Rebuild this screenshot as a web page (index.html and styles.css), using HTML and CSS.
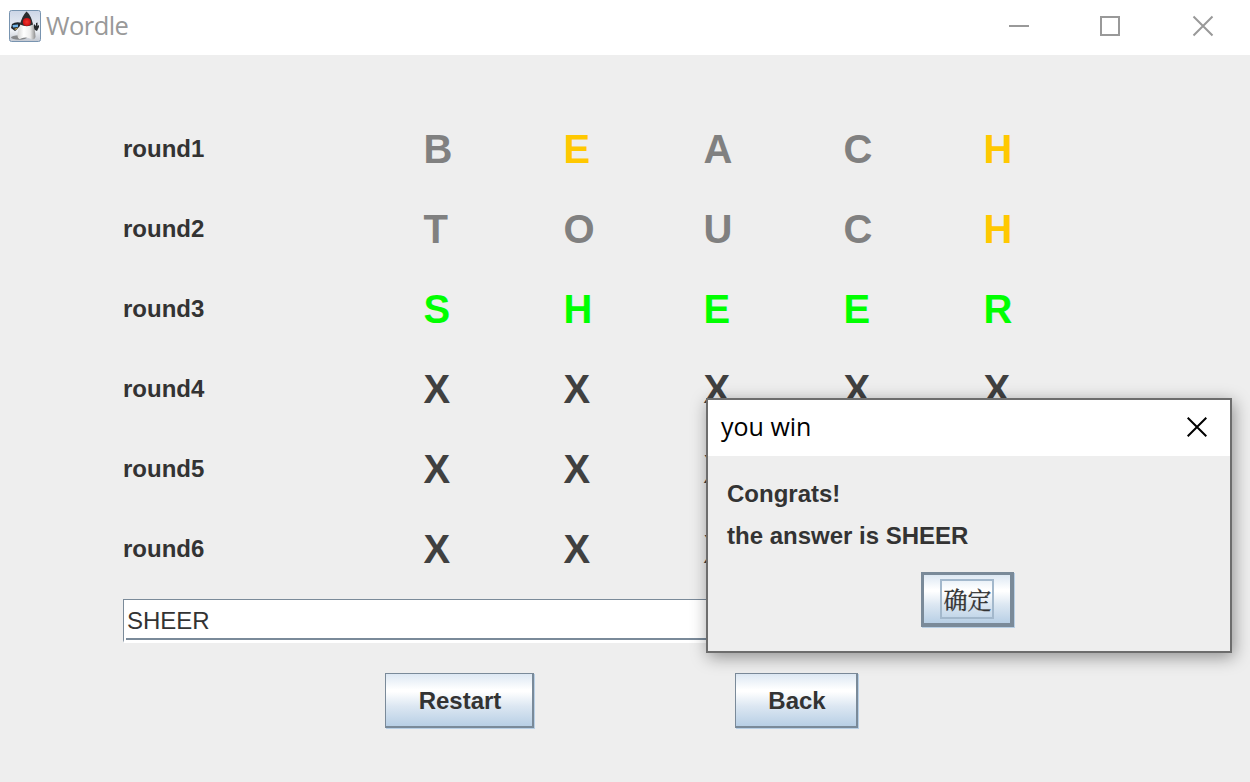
FILE: index.html
```html
<!DOCTYPE html>
<html lang="en">
<head>
<meta charset="utf-8">
<title>Wordle</title>
<link rel="stylesheet" href="styles.css">
</head>
<body>
<header class="titlebar">
  <svg class="app-icon" viewBox="0 0 32 32">
    <defs>
      <linearGradient id="tile" x1="0" y1="0" x2="0" y2="1"><stop offset="0" stop-color="#ccd5e6"/><stop offset=".65" stop-color="#eef1f6"/><stop offset="1" stop-color="#c2c7d0"/></linearGradient>
      <linearGradient id="body" x1="0" y1="0" x2="1" y2="0"><stop offset="0" stop-color="#d5d5d5"/><stop offset=".35" stop-color="#fff"/><stop offset=".7" stop-color="#eee"/><stop offset="1" stop-color="#8d8d8d"/></linearGradient>
      <radialGradient id="nose"><stop offset="0" stop-color="#f5352e"/><stop offset="1" stop-color="#c80f12"/></radialGradient>
    </defs>
    <rect x=".5" y=".5" width="31" height="31" rx="2" fill="url(#tile)" stroke="#7894b0"/>
    <ellipse cx="10" cy="27.500" rx="8" ry="2.200" fill="#666" opacity=".7"/>
    <path d="M12 16C9 17 8 20 6 21L2 18L3 14Q7 11 13 13Z" fill="#20252b"/>
    <path d="M3.500 15L9 14.500L9 17L4 17.500Z" fill="#72b5e8"/>
    <path d="M5 19L9 17.500L7 20Z" fill="#d6a94b"/>
    <path d="M24 19L28 21L30 17V15L28.500 16V12.500L27 13V16L25 14Z" fill="#25282b"/>
    <path d="M12 13Q8 22 8.500 26Q9 30.500 12 28.500Q17 26.500 21 28.500Q25.500 31 26.500 27Q26.500 20 23 12Z" fill="url(#body)"/>
    <path d="M17.500 1.500Q22 5 24 14.500Q18 18 11 14.500Q13 6 17.500 1.500Z" fill="#2b2d2f"/>
    <circle cx="17.800" cy="12" r="4" fill="url(#nose)"/>
  </svg>
  <h1 class="app-name">Wordle</h1>
  <svg class="controls" viewBox="0 0 206 24">
    <path d="M0 12H20" />
    <rect x="92" y="3" width="18" height="18"/>
    <path d="M184.500 2.500L203.500 21.500M203.500 2.500L184.500 21.500"/>
  </svg>
</header>
<main class="content">
  <section class="board">
    <div class="row"><span class="round">round1</span><b class="miss">B</b><b class="near">E</b><b class="miss">A</b><b class="miss">C</b><b class="near">H</b></div>
    <div class="row"><span class="round">round2</span><b class="miss">T</b><b class="miss">O</b><b class="miss">U</b><b class="miss">C</b><b class="near">H</b></div>
    <div class="row"><span class="round">round3</span><b class="hit">S</b><b class="hit">H</b><b class="hit">E</b><b class="hit">E</b><b class="hit">R</b></div>
    <div class="row"><span class="round">round4</span><b>X</b><b>X</b><b>X</b><b>X</b><b>X</b></div>
    <div class="row"><span class="round">round5</span><b>X</b><b>X</b><b>X</b><b>X</b><b>X</b></div>
    <div class="row"><span class="round">round6</span><b>X</b><b>X</b><b>X</b><b>X</b><b>X</b></div>
  </section>
  <div class="field"><div class="field-inner">SHEER</div></div>
  <div class="actions">
    <button class="btn restart">Restart</button>
    <button class="btn back">Back</button>
  </div>
</main>
<section class="dialog">
  <header class="dialog-title">
    <span>you win</span>
    <svg class="close" viewBox="0 0 20 20"><path d="M.7 .7L19.300 19.300M19.300 .7L.7 19.300"/></svg>
  </header>
  <div class="dialog-body">
    <p>Congrats!</p>
    <p>the answer is SHEER</p>
    <button class="btn ok"><span class="focus">确定</span></button>
  </div>
</section>
</body>
</html>
```
FILE: styles.css
```css
* { box-sizing: border-box; }
body {
  margin: 0;
  width: 1250px;
  height: 782px;
  overflow: hidden;
  position: relative;
  background: #eee;
  color: #333;
  font: bold 24px/28px "Liberation Sans", Arial, sans-serif;
}
.titlebar {
  display: flex;
  align-items: center;
  height: 55px;
  padding: 0 35px 3px 9px;
  background: #fff;
}
.app-icon { width: 32px; height: 32px; }
.app-name {
  margin: -2px auto 0 5px;
  color: #999;
  font: 400 25.5px/36px "Open Sans", "Noto Sans", sans-serif;
  letter-spacing: -.55px;
}
.controls {
  width: 206px;
  height: 24px;
  fill: none;
  stroke: #999;
  stroke-width: 2;
}
.content { padding: 54px 0 0 123px; }
.row {
  display: grid;
  grid-template-columns: 300.5px repeat(5, 140px);
  align-items: center;
  height: 80px;
}
.row b { font-size: 40px; line-height: 46px; color: #404040; }
.row .miss { color: #808080; }
.row .near { color: #ffc800; }
.row .hit { color: #0f0; }
.field {
  width: 1004px;
  height: 44px;
  margin-top: 10px;
  border-left: 1px solid #7a8a99;
  border-bottom: 3px solid #fff;
  border-top: 1px solid #7a8a99;
  padding-left: 2px;
  background: #fff;
}
.field-inner {
  height: 40px;
  padding: 7px 0 0 1px;
  border-bottom: 2px solid #7a8a99;
  font-weight: 400;
}
.actions { display: flex; gap: 201px; margin: 30px 0 0 262px; }
.btn {
  height: 55px;
  padding: 2px 0 0 2px;
  color: #333;
  font: inherit;
  border: solid #7a8a99;
  border-width: 1px 2px 2px 1px;
  box-shadow: 1px 1px 0 #b8cfe5;
  background: linear-gradient(#dde8f3 0, #fff 30%, #fff 34%, #dce7f2 62%, #b8cfe5 100%);
}
.restart { width: 149px; }
.back { width: 123px; }
.dialog {
  position: absolute;
  left: 706px;
  top: 398px;
  width: 526px;
  height: 255px;
  border: 2px solid #6d6d6d;
  background: #eee;
  box-shadow: 2px 4px 16px rgba(0, 0, 0, .4);
}
.dialog-title {
  display: flex;
  align-items: center;
  justify-content: space-between;
  height: 56px;
  padding: 0 23px 2px 13px;
  background: #fff;
  color: #000;
  font: 400 25px/34px "Open Sans", "Noto Sans", sans-serif;
}
.dialog-title span { margin-top: -2px; }
.close { width: 20px; height: 20px; stroke: #000; stroke-width: 2; }
.dialog-body { padding: 17px 19px; }
.dialog-body p { margin: 0; height: 42px; line-height: 42px; }
.ok {
  display: flex;
  align-items: flex-start;
  justify-content: flex-start;
  width: 93px;
  height: 55px;
  margin: 15px 0 0 194px;
  padding: 4px 0 0 16px;
  border-width: 3px 4px 4px 3px;
}
.focus {
  width: 54px;
  height: 40px;
  padding-left: 1px;
  border: 2px solid #a3b8cc;
  font: 400 24px/35px "Noto Serif CJK SC", "Noto Sans CJK SC", serif;
  -webkit-text-stroke: .3px #333;
}
```
